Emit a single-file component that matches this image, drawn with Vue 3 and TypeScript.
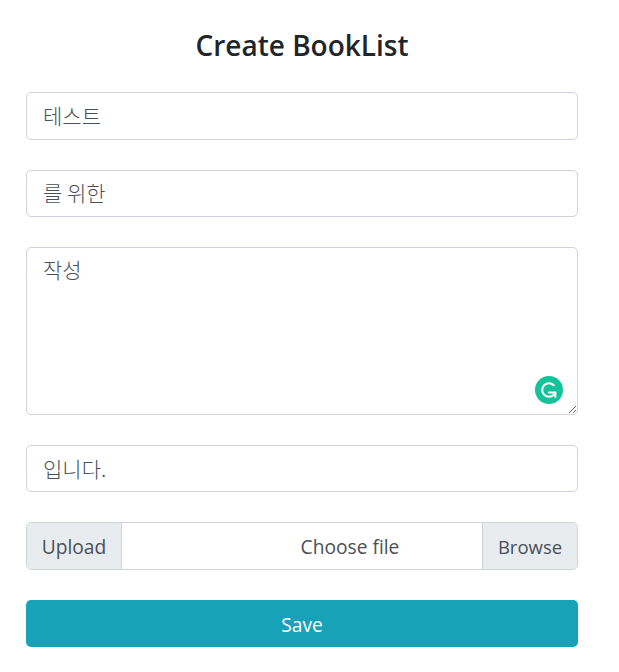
<script setup lang="ts">
import { ref } from 'vue';

const title = ref('테스트');
const audience = ref('를 위한');
const body = ref('작성');
const tail = ref('입니다.');
</script>

<template>
  <div class="page">
    <h1 class="heading">Create BookList</h1>
    <form class="form" @submit.prevent>
      <input v-model="title" class="control" type="text" />
      <input v-model="audience" class="control" type="text" />
      <div class="area-wrap">
        <textarea v-model="body" class="control area"></textarea>
        <span class="grammarly">
          <svg width="28" height="28" viewBox="0 0 28 28" fill="none">
            <circle cx="14" cy="14" r="14" fill="#15c39a" />
            <path
              d="M18.8 9.2A6.8 6.8 0 1 0 18.8 18.8M14 16.6H20.4V21"
              stroke="#fff"
              stroke-width="2"
              stroke-linecap="round"
              stroke-linejoin="miter"
            />
          </svg>
        </span>
      </div>
      <input v-model="tail" class="control" type="text" />
      <div class="file-group">
        <span class="addon addon-left">Upload</span>
        <span class="file-name">Choose file</span>
        <span class="addon addon-right">Browse</span>
      </div>
      <button class="save" type="submit">Save</button>
    </form>
  </div>
</template>

<style>
html,
body {
  margin: 0;
  background: #fff;
}
</style>

<style scoped>
.page {
  width: 552px;
  padding: 0 0 0 26px;
  font-family: "Open Sans", "Noto Sans CJK KR", sans-serif;
  color: #495057;
}

.heading {
  margin: 0;
  padding-top: 26px;
  height: 92px;
  box-sizing: border-box;
  text-align: center;
  font-size: 28px;
  line-height: 38px;
  font-weight: 600;
  color: #212529;
}

.form {
  display: flex;
  flex-direction: column;
  gap: 30px;
}

.control {
  display: block;
  width: 100%;
  height: 47.5px;
  box-sizing: border-box;
  padding: 7px 16px 9px;
  border: 1px solid #ced4da;
  border-radius: 5px;
  background: #fff;
  font-family: "Noto Sans CJK KR", sans-serif;
  font-size: 21px;
  font-weight: 300;
  line-height: 29px;
  color: #495057;
  outline: none;
}

.area-wrap {
  position: relative;
  height: 167.9px;
}

.area {
  height: 167.9px;
  resize: vertical;
}

.grammarly {
  position: absolute;
  right: 15px;
  bottom: 11px;
  width: 28px;
  height: 28px;
}

.grammarly svg {
  display: block;
}

.file-group {
  display: flex;
  align-items: stretch;
  height: 47.5px;
  box-sizing: border-box;
  border: 1px solid #ced4da;
  border-radius: 5px;
  font-size: 19.2px;
  overflow: hidden;
}

.addon {
  display: flex;
  align-items: center;
  box-sizing: border-box;
  width: 95px;
  justify-content: center;
  background: #e9ecef;
}

.addon-left {
  border-right: 1px solid #ced4da;
}

.addon-right {
  border-left: 1px solid #ced4da;
  font-size: 18.5px;
}

.file-name {
  flex: 1;
  display: flex;
  align-items: center;
  justify-content: center;
  padding-left: 96px;
}

.save {
  height: 47.5px;
  padding: 2px 0 0;
  border: none;
  border-radius: 5px;
  background: #17a2b8;
  color: #fff;
  font-family: "Open Sans", sans-serif;
  font-size: 19.2px;
  cursor: pointer;
}
</style>
